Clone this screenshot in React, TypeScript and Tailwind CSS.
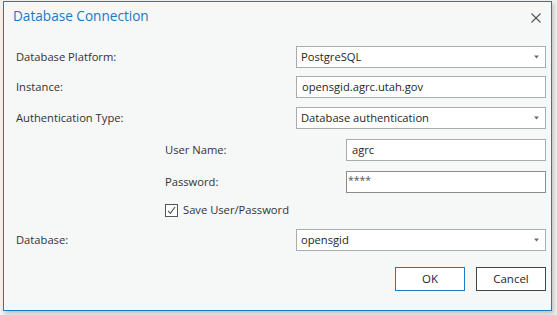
const font = { fontFamily: '"Open Sans", "Noto Sans", sans-serif' }

function Arrow() {
  return (
    <svg width="7" height="4" viewBox="0 0 7 4" className="shrink-0">
      <path d="M1 0.5 L6 0.5 L3.5 3.5 Z" fill="#6b6b6b" />
    </svg>
  )
}

function Select({ value }: { value: string }) {
  return (
    <div className="w-[250px] h-[22px] border border-[#ababab] bg-white flex items-center justify-between pl-[4px] pr-[5px] text-[11.2px] text-[#262626]">
      <span>{value}</span>
      <Arrow />
    </div>
  )
}

function Input({ value, w = 'w-[250px]', border = 'border-[#ababab]' }: { value: string; w?: string; border?: string }) {
  return (
    <div className={`${w} h-[22px] border ${border} bg-white flex items-center pl-[5px] text-[11.2px] text-[#262626]`}>
      {value}
    </div>
  )
}

export default function App() {
  return (
    <div className="w-[557px] h-[315px] bg-[#f0f0f0] pl-[3px] pt-[1px]" style={font}>
      <div className="w-[549px] h-[310px] bg-[#f6f7f7] border border-[#1a7bc8] shadow-[2px_3px_4px_rgba(0,0,0,0.18)] flex flex-col">
        {/* Title bar */}
        <div className="h-[29px] flex items-center justify-between pl-[9px] pr-[9px]">
          <span className="text-[13.6px] text-[#1e78c0]">Database Connection</span>
          <svg width="10" height="10" viewBox="0 0 10 10" className="mr-[1px] mt-[2px]">
            <path d="M0.5 0.5 L9.5 9.5 M9.5 0.5 L0.5 9.5" stroke="#555" strokeWidth="1.1" />
          </svg>
        </div>

        <div className="flex flex-col pl-[12px] pr-[5px] mt-[15px] text-[11.2px] text-[#333]">
          <div className="flex items-center justify-between h-[22px]">
            <span>Database Platform:</span>
            <Select value="PostgreSQL" />
          </div>
          <div className="flex items-center justify-between h-[22px] mt-[8px]">
            <span>Instance:</span>
            <Input value="opensgid.agrc.utah.gov" />
          </div>
          <div className="flex items-center justify-between h-[22px] mt-[9px]">
            <span>Authentication Type:</span>
            <Select value="Database authentication" />
          </div>
          <div className="flex items-center justify-between h-[22px] mt-[10px] pl-[149px]">
            <span>User Name:</span>
            <Input value="agrc" w="w-[200px]" />
          </div>
          <div className="flex items-center justify-between h-[22px] mt-[10px] pl-[149px]">
            <span>Password:</span>
            <div className="w-[200px] h-[22px] border border-[#8c8c8c] bg-white flex items-start pl-[1px] pt-[1px] text-[10.5px] leading-[14px] text-[#555]">
              ****
            </div>
          </div>
          <div className="flex items-center h-[14px] mt-[10px] pl-[149px] gap-[5px]">
            <div className="w-[13px] h-[13px] border border-[#555] bg-white flex items-center justify-center">
              <svg width="9" height="9" viewBox="0 0 9 9">
                <path d="M1 4.8 L3.4 7.3 L8 1" stroke="#555" strokeWidth="1.2" fill="none" />
              </svg>
            </div>
            <span>Save User/Password</span>
          </div>
          <div className="flex items-center justify-between h-[22px] mt-[12px]">
            <span>Database:</span>
            <Select value="opensgid" />
          </div>
          <div className="flex justify-end gap-[11px] mt-[16px]">
            <button className="w-[70px] h-[24px] border border-[#1a7bc8] bg-white text-[11.5px] text-[#262626]">OK</button>
            <button className="w-[70px] h-[24px] border border-[#444] bg-white text-[11.5px] text-[#262626]">Cancel</button>
          </div>
        </div>
      </div>
    </div>
  )
}
